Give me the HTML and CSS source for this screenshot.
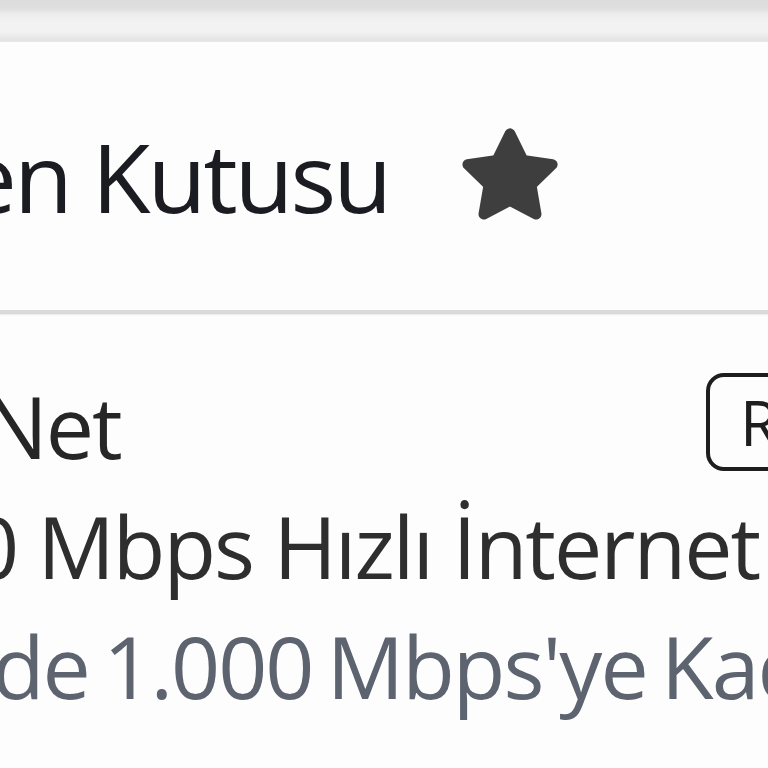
FILE: index.html
```html
<!DOCTYPE html>
<html lang="tr">
<head>
    <meta charset="UTF-8">
    <title>Gelen Kutusu</title>
    <link rel="stylesheet" href="styles.css">
</head>
<body>
    <div class="topbar"></div>
    <div class="header">
        <h1 class="title">en Kutusu</h1>
        <svg class="star" viewBox="0 0 100 100" width="106" height="106">
            <polygon points="50,11 62.3,36 89.9,40 70,59.5 74.7,87 50,74 25.3,87 30,59.5 10.1,40 37.7,36" fill="#3e3e3e" stroke="#3e3e3e" stroke-width="10" stroke-linejoin="round"/>
        </svg>
    </div>
    <div class="mail">
        <div class="mail-top">
            <div class="sender">Net</div>
            <div class="badge">R</div>
        </div>
        <div class="subject">0 Mbps Hızlı İnternet</div>
        <div class="preview">de 1.000 Mbps'ye Kadar</div>
    </div>
</body>
</html>
```

FILE: styles.css
```css
html, body {
    margin: 0;
    padding: 0;
    background: #fdfdfd;
    overflow: hidden;
    font-family: "Open Sans", "Noto Sans", sans-serif;
}

.topbar {
    height: 42px;
    background: linear-gradient(#dcdcdc 0, #dedede 8px, #ececec 14px, #f3f3f3 24px, #f2f2f2 32px, #e4e4e4 40px, #e8e8e8 42px);
}

.header {
    height: 268px;
    display: flex;
    align-items: center;
    gap: 68px;
    border-bottom: 4px solid #dadada;
    box-shadow: 0 1px 1px #eeeeee;
}

.title {
    margin: 0 0 0 -37px;
    font-size: 96px;
    font-weight: 400;
    line-height: 1;
    color: #1b1b22;
    letter-spacing: -3px;
    white-space: nowrap;
}

.star {
    flex: none;
    margin-top: -2px;
}

.mail {
    padding-top: 52px;
    white-space: nowrap;
}

.mail-top {
    display: flex;
    justify-content: space-between;
    align-items: flex-start;
    height: 120px;
}

.sender {
    margin-left: -17px;
    font-size: 86px;
    line-height: 120px;
    color: #262626;
    letter-spacing: -2px;
}

.badge {
    margin: 7px -48px 0 0;
    width: 110px;
    height: 98px;
    box-sizing: border-box;
    border: 4px solid #1e1e1e;
    border-radius: 18px;
    padding-left: 30px;
    font-size: 62px;
    line-height: 90px;
    color: #1e1e1e;
}

.subject {
    margin-left: -30px;
    font-size: 86px;
    line-height: 120px;
    color: #2e2e2e;
    letter-spacing: -2px;
}

.preview {
    margin-left: -8px;
    font-size: 86px;
    line-height: 120px;
    color: #5d6470;
    letter-spacing: -2px;
    word-spacing: -6px;
}
```
